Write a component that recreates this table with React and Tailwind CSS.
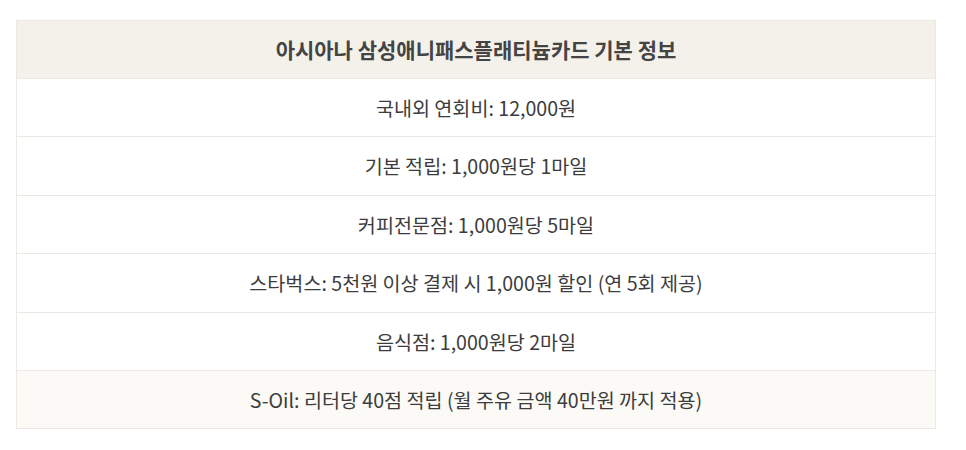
import React from 'react';

const rows = [
  '국내외 연회비: 12,000원',
  '기본 적립: 1,000원당 1마일',
  '커피전문점: 1,000원당 5마일',
  '스타벅스: 5천원 이상 결제 시 1,000원 할인 (연 5회 제공)',
  '음식점: 1,000원당 2마일',
  'S-Oil: 리터당 40점 적립 (월 주유 금액 40만원 까지 적용)',
];

export default function App() {
  return (
    <div className="bg-white w-[966px] h-[450px] px-4 pt-5" style={{ fontFamily: '"Noto Sans CJK KR", "Noto Sans", sans-serif' }}>
      <table className="w-[920px] border-collapse border border-[#ece9e2] text-center">
        <thead>
          <tr className="bg-[#f4f1ea]">
            <th className="h-[58px] text-[21px] font-bold text-[#444]">아시아나 삼성애니패스플래티늄카드 기본 정보</th>
          </tr>
        </thead>
        <tbody>
          {rows.map((text, i) => (
            <tr key={i} className={i === rows.length - 1 ? 'bg-[#fbfaf6]' : 'bg-white'}>
              <td className="h-[58.4px] border-t border-[#ece9e2] text-[19.6px] text-[#3c3c3c]">{text}</td>
            </tr>
          ))}
        </tbody>
      </table>
    </div>
  );
}
